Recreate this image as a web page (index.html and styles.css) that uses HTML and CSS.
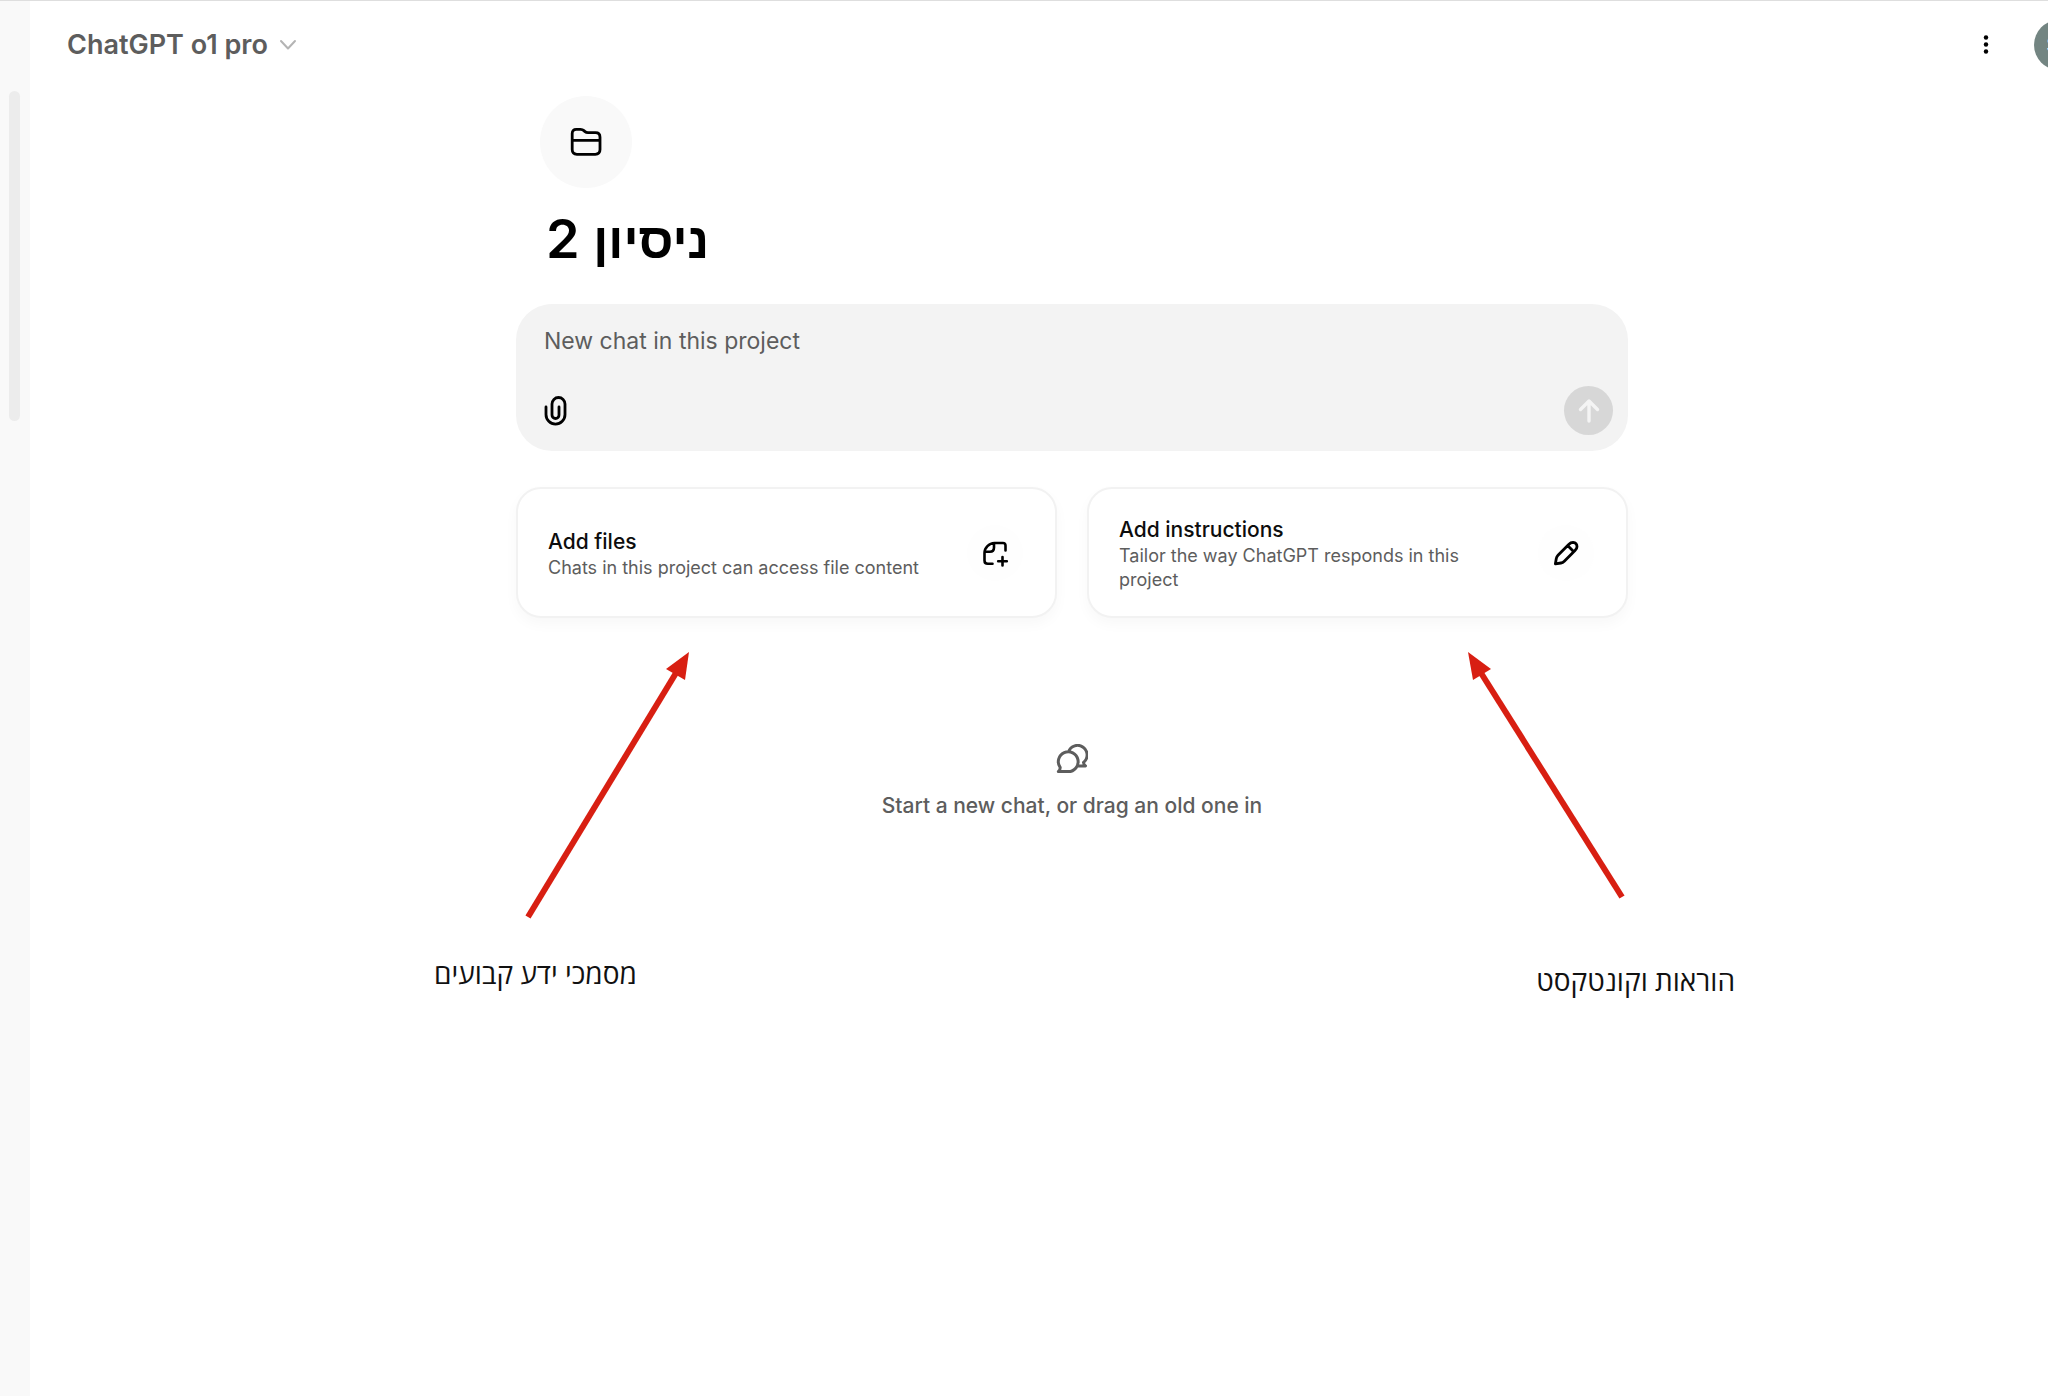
FILE: index.html
```html
<!DOCTYPE html>
<html lang="en">
<head>
    <meta charset="utf-8">
    <title>ChatGPT</title>
    <link rel="stylesheet" href="styles.css">
</head>
<body>
<div class="app">
    <aside class="sidebar">
        <div class="scroll-thumb"></div>
    </aside>
    <div class="page">
        <header class="topbar">
            <button class="model" type="button">
                ChatGPT o1 pro
                <svg class="chevron" viewBox="0 0 18 12" fill="none" stroke="currentColor" stroke-width="2" stroke-linecap="round" stroke-linejoin="round"><path d="M2 2l7 7.500 7-7.500"/></svg>
            </button>
            <div class="topbar-right">
                <button class="more" type="button" aria-label="More">
                    <svg viewBox="0 0 24 24" width="24" height="24" fill="currentColor"><circle cx="12" cy="4.500" r="2.200"/><circle cx="12" cy="11.500" r="2.200"/><circle cx="12" cy="18.500" r="2.200"/></svg>
                </button>
                <button class="avatar" type="button">SR</button>
            </div>
        </header>

        <main class="project">
            <button class="folder" type="button" aria-label="Project icon">
                <svg viewBox="0 0 32 30" width="32" height="30" fill="none" stroke="currentColor" stroke-width="2.800" stroke-linejoin="round"><path d="M2.200 14V6.500Q2.200 2.400 6.300 2.400H10.500Q12.600 2.400 13.900 3.600L15 4.600Q16.200 5.700 18 5.700H25.500Q30 5.700 30 10.200V22.600Q30 27.300 25.300 27.300H6.900Q2.200 27.300 2.200 22.600ZM2.200 13.300H30"/></svg>
            </button>
            <h1 class="title"><span class="hebrew" lang="he">ניסיון</span> 2</h1>

            <form class="composer">
                <textarea class="prompt" rows="1" aria-label="New chat" placeholder="New chat in this project"></textarea>
                <div class="composer-actions">
                    <button class="attach" type="button" aria-label="Attach files">
                        <svg viewBox="0 0 24 32" width="24" height="32" fill="none" stroke="currentColor" stroke-width="2.800" stroke-linecap="round"><path d="M2 12V19.600A9.500 9.500 0 0 0 21 19.600V9A6.500 6.500 0 0 0 8 9V20A3.500 3.500 0 0 0 15 20V12"/></svg>
                    </button>
                    <button class="send" type="button" aria-label="Send">
                        <svg viewBox="0 0 24 28" width="24" height="28" fill="none" stroke="currentColor" stroke-width="3.400" stroke-linecap="round" stroke-linejoin="round"><path d="M12 24V4M3.500 12.500L12 4l8.500 8.500"/></svg>
                    </button>
                </div>
            </form>

            <div class="cards">
                <button class="card" type="button">
                    <span class="card-text">
                        <span class="card-title">Add files</span>
                        <span class="card-sub">Chats in this project can access file content</span>
                    </span>
                    <span class="card-icon">
                        <svg viewBox="0 0 28 28" width="28" height="28" fill="none" stroke="currentColor" stroke-width="2.600" stroke-linecap="round" stroke-linejoin="round"><path d="M24.500 11.500V6.500Q24.500 4 22 4H13.500C8 4.200 3.500 8.700 3.500 14V21.500Q3.500 24.800 6.800 24.800H11.500M13 4.200V8.500Q13 12.700 8.800 12.700H4M21.500 18V26.500M17.200 22.200H25.800"/></svg>
                    </span>
                </button>
                <button class="card" type="button">
                    <span class="card-text">
                        <span class="card-title">Add instructions</span>
                        <span class="card-sub">Tailor the way ChatGPT responds in this project</span>
                    </span>
                    <span class="card-icon">
                        <svg viewBox="0 0 28 28" width="28" height="28" fill="none" stroke="currentColor" stroke-width="2.800" stroke-linecap="round" stroke-linejoin="round"><path d="M3.400 24.800L4.300 19.500Q4.600 17.600 6 16.200L16.700 5.400Q18.700 3.400 21 3.400Q25 3.800 25 7.800Q25 9.600 23 11.600L12.300 22.200Q10.800 23.700 8.900 24ZM15.600 6.600L21.800 12.800"/></svg>
                    </span>
                </button>
            </div>

            <div class="empty">
                <svg viewBox="0 0 32 30" width="32" height="30" fill="none" stroke="currentColor" stroke-width="3" stroke-linejoin="round"><path d="M2.400 27.600H12.200A9.900 9.900 0 1 0 4.200 23.500Q4.300 25.500 2.400 27.600ZM12.500 7.700A9.600 9.600 0 1 1 27.500 18.500Q27.600 20.500 29.500 21.900H21.500"/></svg>
                <p class="empty-text">Start a new chat, or drag an old one in</p>
            </div>

            <!-- red arrows over the page -->
            <svg class="arrow arrow-files" viewBox="0 0 170 270" width="170" height="270"><path class="shaft" d="M8 267L156 23"/><path class="head" d="M169 2L146 19L165 30Z"/></svg>
            <p class="note note-files" lang="he" dir="rtl">מסמכי ידע קבועים</p>
            <svg class="arrow arrow-instructions" viewBox="0 0 160 250" width="160" height="250"><path class="shaft" d="M155 247L14 23"/><path class="head" d="M1 2L24 19L6 30Z"/></svg>
            <p class="note note-instructions" lang="he" dir="rtl">הוראות וקונטקסט</p>
        </main>
    </div>
</div>
</body>
</html>
```
FILE: styles.css
```css
* {
    box-sizing: border-box;
}
body {
    margin: 0;
    overflow: hidden;
    background-color: #fff;
    color: #0d0d0d;
    font-family: Inter, "Open Sans", sans-serif;
}
button {
    border: none;
    padding: 0;
    background: none;
    color: inherit;
    font-family: inherit;
    cursor: pointer;
}
svg {
    display: block;
}
/* slightly wider than the window, the avatar runs off the right edge */
.app {
    display: flex;
    width: calc(100% + 66px);
    min-height: 100vh;
    border-top: 1px solid #dedede;
}
.sidebar {
    width: 30px;
    flex-shrink: 0;
    padding: 90px 10px 0 9px;
    background-color: #f9f9f9;
}
.scroll-thumb {
    height: 330px;
    border-radius: 6px;
    background-color: #ececec;
}
.page {
    flex: 1;
}
.topbar {
    display: flex;
    align-items: center;
    justify-content: space-between;
    height: 87px;
    padding: 0 30px 0 37px;
}
.model {
    display: flex;
    align-items: center;
    gap: 11px;
    color: #5d5d5d;
    font-size: 27px;
    font-weight: 600;
}
.chevron {
    width: 18px;
    height: 12px;
    color: #b4b4b4;
}
.topbar-right {
    display: flex;
    align-items: center;
    gap: 36px;
}
.more {
    color: #000;
}
.avatar {
    width: 50px;
    height: 50px;
    border-radius: 50%;
    background-color: #738582;
    color: #fff;
    font-size: 20px;
}
.project {
    position: relative;
    max-width: 1112px;
    margin: 0 auto;
    padding-top: 8px;
}
.folder {
    display: flex;
    align-items: center;
    justify-content: center;
    width: 92px;
    height: 92px;
    margin-left: 24px;
    border-radius: 50%;
    background-color: #f9f9f9;
    color: #000;
}
.title {
    height: 64px;
    margin: 19px 0 33px 30px;
    color: #000;
    font-size: 54px;
    font-weight: 600;
    line-height: 64px;
}
.hebrew {
    font-family: "Liberation Sans", Arial, sans-serif;
    font-size: 50px;
}
.composer {
    height: 147px;
    padding: 21px 15px 15px 28px;
    border-radius: 36px;
    background-color: #f3f3f3;
}
.prompt {
    display: block;
    width: 100%;
    height: 32px;
    border: none;
    padding: 0;
    outline: none;
    resize: none;
    background: none;
    font-family: inherit;
    font-size: 23px;
    line-height: 32px;
}
.prompt::placeholder {
    color: #5d5d5d;
}
.composer-actions {
    display: flex;
    align-items: center;
    justify-content: space-between;
    margin-top: 29px;
}
.attach {
    color: #000;
}
.send {
    display: flex;
    align-items: center;
    justify-content: center;
    width: 49px;
    height: 49px;
    border-radius: 50%;
    background-color: #d7d7d7;
    color: #f4f4f4;
}
.cards {
    display: grid;
    grid-template-columns: 1fr 1fr;
    gap: 30px;
    margin-top: 36px;
}
.card {
    display: flex;
    align-items: center;
    justify-content: space-between;
    height: 131px;
    padding: 0 32px 0 30px;
    border: 2px solid #f2f2f2;
    border-radius: 25px;
    background-color: #fff;
    box-shadow: 0 6px 14px rgba(0, 0, 0, 0.03);
    text-align: left;
}
.card-title {
    display: block;
    color: #0d0d0d;
    font-size: 21px;
    font-weight: 500;
    line-height: 28px;
}
.card-sub {
    display: block;
    color: #5d5d5d;
    font-size: 18px;
    line-height: 24px;
}
.card-text {
    max-width: 390px;
    padding-top: 2px;
}
.card-icon {
    display: flex;
    align-items: center;
    justify-content: center;
    width: 56px;
    height: 56px;
    border-radius: 50%;
    background-color: #fefefe;
    color: #000;
}
.empty {
    display: flex;
    flex-direction: column;
    align-items: center;
    gap: 18px;
    margin-top: 126px;
    color: #5d5d5d;
}
.empty-text {
    margin: 0;
    font-size: 21px;
    font-weight: 500;
    line-height: 28px;
}
.arrow {
    position: absolute;
}
.shaft {
    stroke: #d81f12;
    stroke-width: 6;
}
.head {
    fill: #d81f12;
}
.arrow-files {
    top: 562px;
    left: 4px;
}
.arrow-instructions {
    top: 562px;
    right: 1px;
}
.note {
    position: absolute;
    margin: 0;
    color: #111;
    font-family: "Open Sans", "Noto Sans", sans-serif;
    font-size: 28px;
    line-height: 36px;
    white-space: nowrap;
}
.note-files {
    top: 867px;
    left: -82px;
}
.note-instructions {
    top: 874px;
    right: -107px;
}
```
